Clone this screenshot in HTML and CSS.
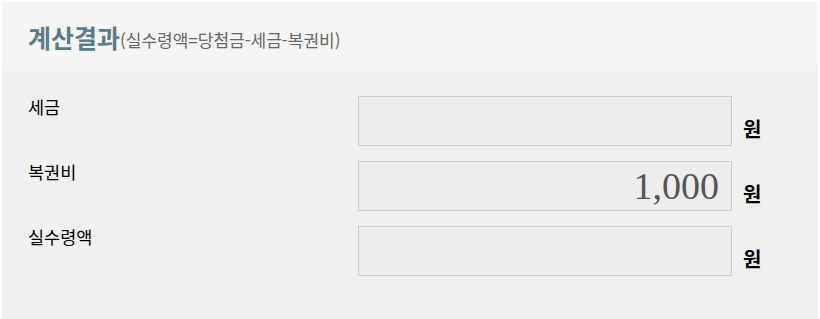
FILE: index.html
```html
<!DOCTYPE html>
<html lang="ko">
<head>
    <meta charset="UTF-8">
    <meta name="viewport" content="width=device-width, initial-scale=1.0">
    <title>계산결과</title>
    <link rel="stylesheet" href="styles.css">
</head>
<body>

    <div class="result-box">
        <div class="result-head">
            <h2>계산결과</h2><span class="formula">(실수령액=당첨금-세금-복권비)</span>
        </div>

        <div class="result-body">
            <div class="row">
                <label for="tax">세금</label>
                <input type="text" id="tax" class="amount" readonly>
                <span class="unit">원</span>
            </div>
            <div class="row">
                <label for="fee">복권비</label>
                <input type="text" id="fee" class="amount" value="1,000" readonly>
                <span class="unit">원</span>
            </div>
            <div class="row">
                <label for="net">실수령액</label>
                <input type="text" id="net" class="amount" readonly>
                <span class="unit">원</span>
            </div>
        </div>
    </div>

</body>
</html>
```

FILE: styles.css
```css
body { margin: 2px; background: #fff; font-family: "Noto Sans CJK KR", "Noto Sans", sans-serif; color: #000; }
.result-box { background: #f0f0f0; min-height: 330px; }
.result-head { background: #f5f5f5; height: 69px; padding: 0 26px; display: flex; align-items: center; }
.result-head h2 { margin: 0; font-size: 25px; font-weight: bold; color: #5b7b8c; }
.result-head .formula { font-size: 17px; color: #666; margin-top: 5px; }
.result-body { padding: 25px 26px 0; display: grid; row-gap: 15px; }
.row { display: grid; grid-template-columns: 330px 374px auto; align-items: start; }
.row label { font-size: 17.5px; line-height: 24px; margin-top: -1px; }
.amount { box-sizing: border-box; width: 374px; height: 50px; margin: 0; border: 1px solid #ccc; background: #ededed; padding: 0 12px 0 10px; text-align: right; font-family: "Liberation Serif", serif; font-size: 38px; color: #555; outline: none; }
.unit { align-self: end; margin-left: 11px; margin-bottom: 3px; font-size: 20px; font-weight: bold; line-height: 28px; }
```
